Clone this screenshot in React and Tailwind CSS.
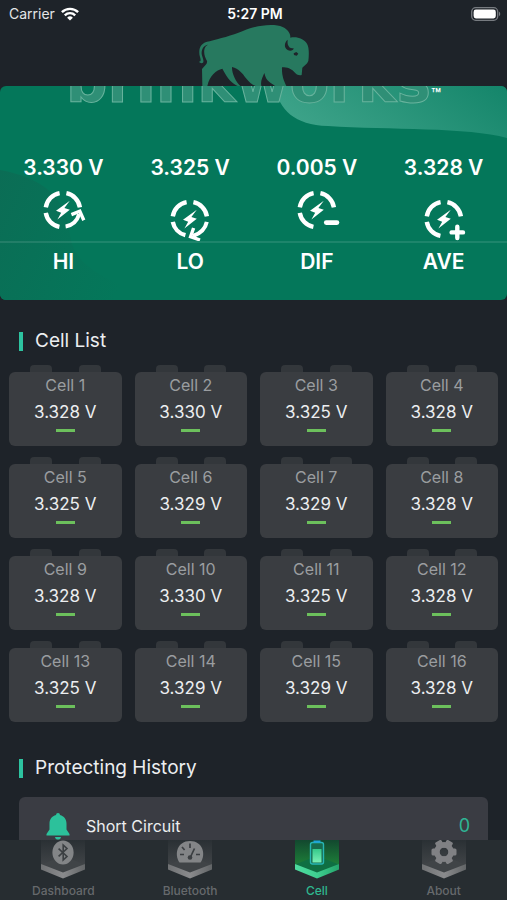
import React from "react";

const stats = [
  { label: "HI", value: "3.330 V", kind: "hi", align: "items-start" },
  { label: "LO", value: "3.325 V", kind: "lo", align: "items-end" },
  { label: "DIF", value: "0.005 V", kind: "dif", align: "items-start" },
  { label: "AVE", value: "3.328 V", kind: "ave", align: "items-end" },
];

const cells = [
  "3.328 V", "3.330 V", "3.325 V", "3.328 V",
  "3.325 V", "3.329 V", "3.329 V", "3.328 V",
  "3.328 V", "3.330 V", "3.325 V", "3.328 V",
  "3.325 V", "3.329 V", "3.329 V", "3.328 V",
];

const tabs = [
  { label: "Dashboard", kind: "dashboard" },
  { label: "Bluetooth", kind: "bluetooth" },
  { label: "Cell", kind: "cell", active: true },
  { label: "About", kind: "about" },
];

function WifiIcon() {
  return (
    <svg viewBox="0 0 18 14" className="h-[14px] w-[18px]" fill="none" stroke="#fff" strokeWidth="2.4" aria-hidden="true">
      <path d="M0.9 5.2a11.5 11.5 0 0 1 16.2 0" />
      <path d="M3.8 8.3a7.4 7.4 0 0 1 10.4 0" />
      <path d="M9 13.6 6.1 10.7a4.1 4.1 0 0 1 5.8 0Z" fill="#fff" stroke="none" />
    </svg>
  );
}

function BatteryIcon() {
  return (
    <svg viewBox="0 0 30 14" className="h-[14px] w-[30px]" aria-hidden="true">
      <rect x="0.7" y="0.7" width="26" height="12.6" rx="4" fill="none" stroke="#777b80" strokeWidth="1.3" />
      <rect x="2.6" y="2.6" width="22.2" height="8.8" rx="2.3" fill="#fff" />
      <path d="M28 4.8c1.6.6 1.6 3.8 0 4.4Z" fill="#777b80" />
    </svg>
  );
}

function Bison() {
  return (
    <svg viewBox="30 14 330 183" className="h-[61px] w-[110px]" aria-hidden="true">
      <path
        fill="#27795f"
        d="M62 63 C90 56 130 45 160 33 C190 20 215 15 245 14 C275 14 292 22 301 38 C304 44 304 48 304 52 C325 48 345 56 354 70 C361 82 360 105 358 122 C354 132 346 136 340 142 L338 164 C330 166 322 163 315 154 C306 145 296 141 279 141 C278 165 284 180 292 197 L258 197 C246 186 232 186 226 158 C220 172 214 182 217 197 L200 197 C188 194 180 184 171 174 C160 158 150 146 129 140 C128 158 140 184 154 197 L146 197 C130 190 116 176 100 145 C82 150 62 164 55 197 L40 197 L39 146 C48 136 56 130 54 122 C48 112 44 100 46 88 C47 80 52 75 57 73 C44 74 37 88 38 101 C40 112 46 120 42 127 C38 130 32 128 29 124 C36 125 36 119 33 110 C27 90 32 66 62 63Z"
      />
      <path fill="#1f242a" d="M296 58 C286 66 284 82 296 89 C304 94 314 90 314 84 C308 84 302 84 299 78 C294 70 296 63 296 58Z" />
      <path fill="#1f242a" d="m314 99 8-4 6 5-5 6-8-2Z" />
    </svg>
  );
}

function StatIcon({ kind }) {
  return (
    <svg viewBox="0 0 48 44" className="h-[44px] w-[48px]" fill="none" stroke="#fff" strokeWidth="4.4" aria-hidden="true">
      <path d="M6.8 19.4A17 17 0 0 1 20.6 5.2" />
      <path d="M27.4 5.2A17 17 0 0 1 40.9 19.4" />
      <path d={kind === "lo" ? "M6.8 24.8A17 17 0 0 0 19.4 38.2" : "M6.8 24.8A17 17 0 0 0 20.4 38.8"} />
      {kind === "hi" && (
        <>
          <path d="M26.6 38.4C33.5 37.4 38 33.5 40.2 26" strokeWidth="4" />
          <path d="M32.4 26.6 40.8 23.2 44.8 32.2" strokeWidth="3.4" />
        </>
      )}
      {kind === "lo" && (
        <>
          <path d="M40.8 24.8C39.4 31.4 34.500 36.400 27 39" strokeWidth="4" />
          <path d="M27.600 31 24.600 39.600 34 43" strokeWidth="3.400" />
        </>
      )}
      {kind === "dif" && <path d="M33.2 34.6H44" strokeLinecap="round" strokeWidth="4.6" />}
      {kind === "ave" && <path d="M31.6 35.4H43M37.3 29.7V41.1" strokeLinecap="round" strokeWidth="4.4" />}
      <path fill="#fff" stroke="none" d="M30.8 12.8 17 22.8l5.2 2-3.8 6.8 12.4-9.8-5.4-1.8Z" />
    </svg>
  );
}

function CardBackdrop() {
  return (
    <svg viewBox="0 0 507 214" preserveAspectRatio="none" className="absolute inset-0 h-full w-full" aria-hidden="true">
      <defs>
        <linearGradient id="sheen" x1="0" y1="0.3" x2="1" y2="0">
          <stop offset="0" stopColor="#3ca288" />
          <stop offset="1" stopColor="#14856a" />
        </linearGradient>
        <linearGradient id="shade" x1="0" y1="0" x2="1" y2="0.4">
          <stop offset="0" stopColor="#0b6d55" />
          <stop offset="1" stopColor="#04775a" />
        </linearGradient>
      </defs>
      <path d="M274 0C280 24 294 39 328 40C390 44 468 41 507 52V0Z" fill="url(#sheen)" />
      <path d="M0 84C42 92 66 110 70 148C74 190 130 198 150 214H0Z" fill="url(#shade)" />
    </svg>
  );
}

function TabGlyph({ kind }) {
  if (kind === "dashboard") {
    return (
      <>
        <ellipse cx="22" cy="12.5" rx="10.6" ry="12" fill="#838587" />
        <path d="M17.6 8.6 26 16.4 22.2 20V5L26 8.6 17.6 16.4" fill="none" stroke="#3b3f42" strokeWidth="1.6" />
      </>
    );
  }
  if (kind === "bluetooth") {
    return (
      <>
        <path d="M11.5 22.6C5.6 14 9.5 1 22 1S38.4 14 32.5 22.6Z" fill="#838587" />
        <path d="M22 3.5V8M14 7l2.6 3M12 14.5h4M28 14.5h4M26.5 8.5 22 18" fill="none" stroke="#3b3f42" strokeWidth="1.7" />
        <circle cx="22" cy="17.5" r="2.3" fill="#3b3f42" />
      </>
    );
  }
  if (kind === "cell") {
    return (
      <>
        <rect x="15.5" y="2.5" width="13" height="21.5" rx="2" fill="#176b4d" stroke="#27b6b4" strokeWidth="1.4" />
        <path d="M18.5 1.6h7" stroke="#1fa3d8" strokeWidth="2.2" />
        <rect x="17.5" y="9" width="9" height="13.5" fill="url(#charge)" />
      </>
    );
  }
  return (
    <>
      <circle cx="22" cy="12" r="7.2" fill="none" stroke="#808184" strokeWidth="5.4" />
      <g fill="#808184">
        <rect x="18.4" y="-0.5" width="7.2" height="25" rx="1.6" mask="url(#hub)" transform="rotate(30 22 12)" />
        <rect x="18.4" y="-0.5" width="7.2" height="25" rx="1.6" mask="url(#hub)" transform="rotate(90 22 12)" />
        <rect x="18.4" y="-0.5" width="7.2" height="25" rx="1.6" mask="url(#hub)" transform="rotate(150 22 12)" />
      </g>
      <mask id="hub" maskUnits="userSpaceOnUse" x="0" y="-4" width="44" height="34">
        <rect x="0" y="-4" width="44" height="34" fill="#fff" />
        <circle cx="22" cy="12" r="4.6" fill="#000" />
      </mask>
    </>
  );
}

function TabIcon({ kind, active }) {
  const id = `tab-${kind}`;
  return (
    <svg viewBox="0 0 44 39" className="h-[39px] w-[44px]" aria-hidden="true">
      <defs>
        <linearGradient id={id} x1="0" y1="0" x2="0" y2="1">
          <stop offset="0" stopColor={active ? "#12482f" : "#2a3034"} />
          <stop offset="1" stopColor={active ? "#22933c" : "#484b4e"} />
        </linearGradient>
        <linearGradient id="charge" x1="0" y1="0" x2="0" y2="1">
          <stop offset="0" stopColor="#35c98a" />
          <stop offset="1" stopColor="#7af0b6" />
        </linearGradient>
        <linearGradient id={`${id}-edge`} x1="0" y1="0" x2="1" y2="0">
          <stop offset="0" stopColor={active ? "#4fdca0" : "#707274"} />
          <stop offset="0.5" stopColor={active ? "#3fcf90" : "#8a8b8d"} />
          <stop offset="1" stopColor={active ? "#25a56c" : "#626567"} />
        </linearGradient>
      </defs>
      <path d="M0 0H44V24L22 34 0 24Z" fill={`url(#${id})`} />
      <path d="M22 16 44 24.5 22 34 0 24.5Z" fill={active ? "#0f6f43" : "#404447"} />
      <path d="M0 24 22 32.5 44 24V29.5L22 38.5 0 29.5Z" fill={`url(#${id}-edge)`} />
      <TabGlyph kind={kind} />
    </svg>
  );
}

function SectionTitle({ children }) {
  return (
    <h2 className="flex items-center gap-3 px-[19px] text-[19px] leading-7 text-[#eceef0]">
      <span className="h-[19px] w-1 bg-[#2dc3a0]" />
      {children}
    </h2>
  );
}

function CellCard({ index, value }) {
  return (
    <li>
      <div className="flex h-[7px] justify-between px-[21px]">
        <span className="w-[22px] rounded-t-sm bg-[#33373b]" />
        <span className="w-[22px] rounded-t-sm bg-[#33373b]" />
      </div>
      <div className="flex h-[74px] flex-col items-center rounded-md bg-[#3a3d41]">
        <span className="text-base leading-[27px] text-[#9a9da0]">Cell {index}</span>
        <span className="text-[17px] leading-[27px] text-[#eceef0]">{value}</span>
        <span className="mt-[3px] h-[3px] w-[19px] bg-[#6cc05c]" />
      </div>
    </li>
  );
}

export default function App() {
  return (
    <div className="flex h-screen flex-col overflow-hidden bg-[#1e2329] font-['Inter','Liberation_Sans',sans-serif] text-white">
      <header className="shrink-0">
        <div className="grid h-[25px] grid-cols-3 items-center pt-[3px] pr-[6px] pl-[9px] text-sm">
          <div className="flex items-center gap-[6px] text-[#e4e5e7]">
            Carrier <WifiIcon />
          </div>
          <div className="text-center font-semibold">5:27 PM</div>
          <div className="flex justify-end">
            <BatteryIcon />
          </div>
        </div>
        <div className="flex justify-center">
          <Bison />
        </div>
      </header>

      <main className="min-h-0 flex-1 overflow-hidden">
        <section className="relative h-[214px] overflow-hidden rounded-md bg-[#04775a]">
          <CardBackdrop />
          <div className="relative flex h-[18px] items-end justify-center overflow-hidden">
            <span className="font-['DejaVu_Sans',sans-serif] text-[58px] leading-[44px] font-bold text-[#2f8f76] [-webkit-text-stroke:1px_#68b39d]">
              brinkworks
            </span>
            <span className="self-start text-base leading-4 font-semibold">™</span>
          </div>
          <dl className="relative grid grid-cols-4 pt-[50px] text-center text-[21px] leading-7 font-semibold">
            {stats.map((s) => (
              <div key={s.label} className="flex flex-col-reverse">
                <dt className="border-t-2 border-white/10 pt-[5px]">{s.label}</dt>
                <dd>
                  {s.value}
                  <div className={`mt-[6px] flex h-[53px] justify-center ${s.align}`}>
                    <StatIcon kind={s.kind} />
                  </div>
                </dd>
              </div>
            ))}
          </dl>
        </section>

        <section className="pt-[27px]">
          <SectionTitle>Cell List</SectionTitle>
          <ul className="grid grid-cols-4 gap-x-[13px] gap-y-[11px] px-[9px] pt-[10px]">
            {cells.map((v, i) => (
              <CellCard key={i} index={i + 1} value={v} />
            ))}
          </ul>
        </section>

        <section className="pt-8">
          <SectionTitle>Protecting History</SectionTitle>
          <div className="mx-[19px] mt-[15px] flex h-[57px] items-center rounded-md bg-[#3a3c43] pr-[18px] pl-[27px]">
            <svg viewBox="0 0 24 28" className="h-7 w-6" fill="#2cc19b" aria-hidden="true">
              <path d="M12 1a2 2 0 0 1 2 2c4 1 6.5 4.2 6.5 8.5v6L23.5 22v1.5H.5V22l3-4.500v-6C3.500 7.200 6 4 10 3a2 2 0 0 1 2-2ZM9 25h6c-.3 1.800-1.500 2.600-3 2.600S9.300 26.800 9 25Z" />
            </svg>
            <span className="ml-4 flex-1 text-base text-[#eceef0]">Short Circuit</span>
            <span className="text-lg text-[#2fb595]">0</span>
          </div>
        </section>
      </main>

      <nav className="grid h-[60px] shrink-0 grid-cols-4 bg-[#272d31]">
        {tabs.map((t) => (
          <button
            key={t.label}
            type="button"
            aria-current={t.active ? "page" : undefined}
            className={`flex flex-col items-center text-[12px] leading-4 font-medium ${t.active ? "text-[#2fb88f]" : "text-[#66696c]"}`}
          >
            <TabIcon kind={t.kind} active={t.active} />
            <span className="mt-1">{t.label}</span>
          </button>
        ))}
      </nav>
    </div>
  );
}
